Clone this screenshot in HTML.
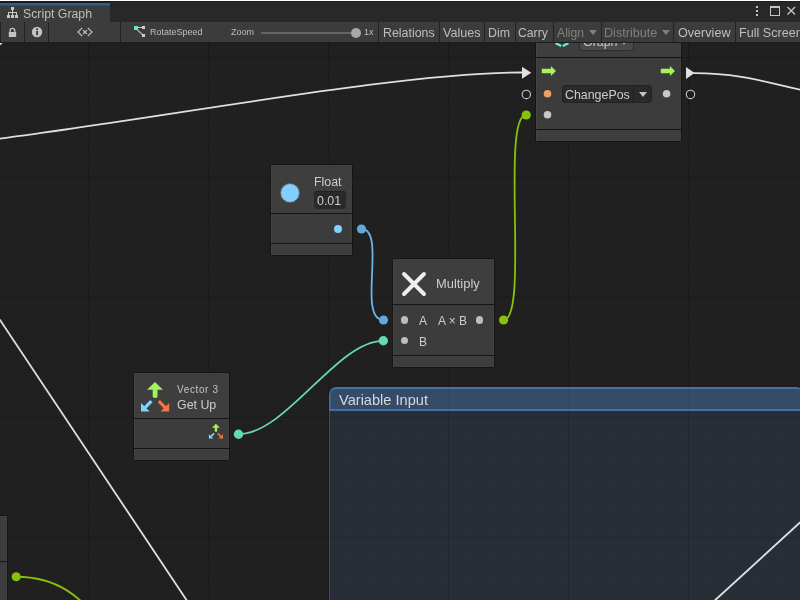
<!DOCTYPE html>
<html><head><meta charset="utf-8">
<style>
*{box-sizing:border-box;margin:0;padding:0}
html,body{width:800px;height:600px;overflow:hidden;background:#202020}
body{-webkit-font-smoothing:antialiased;position:relative;font-family:"Liberation Sans",sans-serif;color:#c4c4c4}
.abs{position:absolute}
#canvas{position:absolute;left:0;top:42px;width:800px;height:558px;background-color:#202020;
background-image:
linear-gradient(to right,#1a1a1a 1px,transparent 1px),
linear-gradient(to bottom,#1a1a1a 1px,transparent 1px),
linear-gradient(to right,#1f1f1f 1px,transparent 1px),
linear-gradient(to bottom,#1f1f1f 1px,transparent 1px);
background-size:120px 120px,120px 120px,12px 12px,12px 12px;
background-position:88px 15px,88px 15px,4px 3px,4px 3px}
#tabbar{position:absolute;left:0;top:0;width:800px;height:22px;background:#282828}
#tab{position:absolute;left:0;top:2px;width:110px;height:20px;background:linear-gradient(to bottom,#1c1c1c 0,#1c1c1c 1px,#2d5f8f 1px,#2d5f8f 3px,#34506c 3px,#34506c 3.6px,#3c3c3c 3.6px)}
#toolbar{position:absolute;left:0;top:22px;width:800px;height:20px;background:#3c3c3c;box-shadow:inset 1px 0 0 #232323,0 1px 0 #1c1c1c}
.sep{position:absolute;top:0;width:1px;height:20px;background:#232323}
.tt{will-change:transform;position:absolute;top:0;height:20px;line-height:20px;font-size:12.4px;color:#bebebe;white-space:nowrap}
.dis{color:#808080}
.node{position:absolute;background:#151515;border-radius:3px;overflow:hidden}
.sec{position:absolute;left:1px;right:1px;background:#3c3c3c;box-shadow:inset 1px 0 0 #444,inset -1px 0 0 #404040}
.hd{background:#3e3e3e}.ft{background:#3e3e3e}
.nt{will-change:transform;position:absolute;white-space:nowrap;color:#cccccc;font-size:12.4px;line-height:14px}
.dot{position:absolute;border-radius:50%}
</style></head><body>
<div id="canvas"></div>

<!-- group -->
<div class="abs" style="left:329px;top:387px;width:475px;height:230px;border-radius:7px;background-color:#282e38;overflow:hidden;
background-image:linear-gradient(to right,#21272f 1px,transparent 1px),linear-gradient(to bottom,#21272f 1px,transparent 1px),linear-gradient(to right,#272d37 1px,transparent 1px),linear-gradient(to bottom,#272d37 1px,transparent 1px);
background-size:120px 120px,120px 120px,12px 12px,12px 12px;background-position:119px 30px,119px 30px,11px 6px,11px 6px">
  <div class="abs" style="left:0;top:0;right:0;height:24px;border-radius:7px 7px 0 0;background-color:#354c68;
  background-image:linear-gradient(to right,#31465f 1px,transparent 1px),linear-gradient(to right,#344a66 1px,transparent 1px),linear-gradient(to bottom,#344a66 1px,transparent 1px);
  background-size:120px 120px,12px 12px,12px 12px;background-position:119px 0,11px 0,11px 6px;
  box-shadow:inset 0 2px 0 #4770a2,inset 0 -2px 0 #4770a2,inset 1.5px 0 0 #4770a2,inset -1.5px 0 0 #4770a2"></div>
  <div class="abs" style="left:0;top:24px;width:1px;bottom:0;background:#3a4e66"></div>
  <div class="abs" style="right:0;top:24px;width:1px;bottom:0;background:#3a4e66"></div>
  <div class="nt" style="left:10px;top:5px;font-size:14.6px;line-height:16px;color:#d4d8de">Variable Input</div>
</div>

<svg class="abs" style="left:0;top:0" width="800" height="600" viewBox="0 0 800 600">
  <g fill="none" stroke-linecap="round">
    <path d="M-162.4 152.2 C2.2 152.2 357.4 72.5 522 72.5" stroke="#e0e0e0" stroke-width="1.8"/>
    <path d="M694 73.1 C766.2 73.1 794.4 97.1 866.6 97.1" stroke="#e0e0e0" stroke-width="1.8"/>
    <path d="M0 320 L186.5 600" stroke="#e0e0e0" stroke-width="1.8"/>
    <path d="M715.3 600 L800 522.5" stroke="#e0e0e0" stroke-width="1.8"/>
    <path d="M503.5 320 C529.5 320 500.4 115 526.2 115" stroke="#86c20c" stroke-width="1.8"/>
    <path d="M361.5 229 C387.1 229 356.6 320 383.5 320" stroke="#6cb2e4" stroke-width="1.8"/>
    <path d="M238.5 434.2 C286 434.2 337 340.8 383 340.8" stroke="#64d8b2" stroke-width="1.8"/>
    <path d="M16.2 576.75 C94.7 576.75 100.2 650 150 650" stroke="#86c20c" stroke-width="1.8"/>
  </g>
  <!-- control ports -->
  <polygon points="522,66.8 531.3,72.8 522,78.8" fill="#e0e0e0"/>
  <polygon points="686,67 694.6,73 686,79" fill="#e0e0e0"/>
  <circle cx="526.3" cy="94.4" r="4.2" fill="none" stroke="#cccccc" stroke-width="1.1"/>
  <circle cx="690.5" cy="94.4" r="4.2" fill="none" stroke="#cccccc" stroke-width="1.1"/>
  <!-- outer data ports -->
  <circle cx="526.2" cy="115" r="4.6" fill="#86c20c"/>
  <circle cx="503.6" cy="320" r="4.6" fill="#86c20c"/>
  <circle cx="361.5" cy="229" r="4.6" fill="#63a8dc"/>
  <circle cx="383.5" cy="320" r="4.6" fill="#63a8dc"/>
  <circle cx="383.3" cy="340.8" r="4.7" fill="#64d8b2"/>
  <circle cx="238.5" cy="434.2" r="4.7" fill="#64d8b2"/>
  <circle cx="16.2" cy="576.75" r="4.6" fill="#86c20c"/>
</svg>

<!-- top node -->
<div class="node" style="left:535px;top:20px;width:147px;height:122px">
  <div class="sec hd" style="top:1px;height:36px"></div>
  <div class="sec" style="top:38px;height:71px"></div>
  <div class="sec ft" style="top:110px;height:11px"></div>
</div>
<div class="abs" style="left:580px;top:30px;width:53px;height:20px;background:#4a4a4a;border-radius:3px;box-shadow:0 0 0 1px #2e2e2e"></div>
<div class="nt" style="left:583px;top:35px">Graph</div>
<svg class="abs" style="left:621px;top:41px" width="6" height="4"><polygon points="0,0 6,0 3,3.5" fill="#d2d2d2"/></svg>
<svg class="abs" style="left:0;top:0" width="600" height="60"><path d="M556.3 43.4 L560.3 45.6 M567.7 43.4 L563.7 45.6" stroke="#5ef0d8" stroke-width="2.3" stroke-linecap="round"/></svg>
<svg class="abs" style="left:0;top:0" width="800" height="600">
  <!-- green arrows -->
  <path d="M541.8 68.8 H550.9 V65.9 L556 71 L550.9 76.1 V73.2 H541.8 Z" fill="#a8f25c"/>
  <path d="M660.8 68.8 H669.9 V65.9 L675 71 L669.9 76.1 V73.2 H660.8 Z" fill="#a8f25c"/>
  <circle cx="547.5" cy="93.8" r="3.8" fill="#f0a064"/>
  <circle cx="547.5" cy="114.8" r="3.8" fill="#c8c8c8"/>
  <circle cx="666.6" cy="93.8" r="3.8" fill="#c8c8c8"/>
</svg>
<div class="abs" style="left:562px;top:85px;width:90px;height:18px;background:#2a2a2a;border-radius:3px;border:1px solid #232323"></div>
<div class="abs" style="left:633px;top:85px;width:1px;height:18px;background:#1e1e1e"></div>
<div class="nt" style="left:565px;top:88px">ChangePos</div>
<svg class="abs" style="left:639px;top:91.5px" width="8" height="5"><polygon points="0,0 8,0 4,5" fill="#c4c4c4"/></svg>

<!-- Float node -->
<div class="node" style="left:270px;top:164px;width:83px;height:92px">
  <div class="sec hd" style="top:1px;height:48px"></div>
  <div class="sec" style="top:50px;height:29px"></div>
  <div class="sec ft" style="top:80px;height:11px"></div>
</div>
<div class="dot" style="left:279.9px;top:182.5px;width:20.2px;height:20.2px;background:#80cfff;border:1px solid #6a5a50"></div>
<div class="nt" style="left:314px;top:175px">Float</div>
<div class="abs" style="left:314px;top:191px;width:32px;height:18px;background:#2a2a2a;border-radius:3px;box-shadow:inset 0 1px 0 #202020"></div>
<div class="nt" style="left:317px;top:194px">0.01</div>
<div class="dot" style="left:334px;top:224.6px;width:8px;height:8px;background:#86cfff"></div>

<!-- Multiply node -->
<div class="node" style="left:392px;top:258px;width:103px;height:110px">
  <div class="sec hd" style="top:1px;height:45px"></div>
  <div class="sec" style="top:47px;height:50px"></div>
  <div class="sec ft" style="top:98px;height:11px"></div>
</div>
<svg class="abs" style="left:400px;top:270px" width="28" height="28"><path d="M4 4 L24 24 M24 4 L4 24" stroke="#eeeeee" stroke-width="3.9" stroke-linecap="round"/></svg>
<div class="nt" style="left:436px;top:277px;font-size:12.9px">Multiply</div>
<div class="dot" style="left:400.8px;top:316px;width:7.6px;height:7.6px;background:#bdbdbd"></div>
<div class="dot" style="left:400.8px;top:336.8px;width:7.6px;height:7.6px;background:#bdbdbd"></div>
<div class="dot" style="left:475.7px;top:316px;width:7.6px;height:7.6px;background:#bdbdbd"></div>
<div class="nt" style="left:419px;top:314px;font-size:12px">A</div>
<div class="nt" style="left:419px;top:335px;font-size:12px">B</div>
<div class="nt" style="left:438px;top:314px;font-size:12px">A × B</div>

<!-- Vector3 node -->
<div class="node" style="left:133px;top:372px;width:97px;height:89px">
  <div class="sec hd" style="top:1px;height:45px"></div>
  <div class="sec" style="top:47px;height:29px"></div>
  <div class="sec ft" style="top:77px;height:11px"></div>
</div>
<svg class="abs" style="left:0;top:0" width="800" height="600">
  <g>
    <path d="M155 381.9 L162.9 389.7 H157.5 V397 Q155.1 399.2 152.7 397 V389.7 H147.1 Z" fill="#a0f060"/>
    <path d="M141 402.9 V411.6 H149.7 Z" fill="#80d4ff"/><path d="M145 407.6 L151.4 401.2" stroke="#80d4ff" stroke-width="3.2"/>
    <path d="M169.2 402.9 V411.6 H160.5 Z" fill="#f57442"/><path d="M165.2 407.6 L158.8 401.2" stroke="#f57442" stroke-width="3.2"/>
  </g>
  <g transform="translate(215.95 423.75) scale(0.5) translate(-155.1 -381.9)">
    <path d="M155 381.9 L162.9 389.7 H157.5 V397 Q155.1 399.2 152.7 397 V389.7 H147.1 Z" fill="#a0f060"/>
    <path d="M141 402.9 V411.6 H149.7 Z" fill="#80d4ff"/><path d="M145 407.6 L151.4 401.2" stroke="#80d4ff" stroke-width="3.2"/>
    <path d="M169.2 402.9 V411.6 H160.5 Z" fill="#f57442"/><path d="M165.2 407.6 L158.8 401.2" stroke="#f57442" stroke-width="3.2"/>
  </g>
</svg>
<div class="nt" style="left:177px;top:383.8px;font-size:10px;line-height:12px;letter-spacing:0.62px;color:#c4c4c4">Vector 3</div>
<div class="nt" style="left:177px;top:398px">Get Up</div>


<!-- left edge node -->
<div class="node" style="left:-10px;top:515px;width:18px;height:100px">
  <div class="sec hd" style="top:1px;height:45px"></div>
  <div class="sec" style="top:47px;height:60px"></div>
</div>
<svg class="abs" style="left:0;top:42px" width="4" height="4"><polygon points="0,0.5 3.2,0.5 0,3.5" fill="#e0e0e0"/></svg>

<!-- tab bar -->
<div id="tabbar">
  <div class="abs" style="left:0;top:0;width:800px;height:1px;background:#ffffff"></div><div class="abs" style="left:0;top:1px;width:800px;height:1px;background:#1a1a1a"></div>
  <div id="tab"></div>
  <svg class="abs" style="left:0;top:0" width="22" height="22" fill="#c8c8c8">
    <rect x="11" y="7" width="3" height="3"/>
    <rect x="12" y="10" width="1" height="2"/>
    <rect x="8" y="12" width="9" height="1"/>
    <rect x="8" y="13" width="1" height="2"/><rect x="12" y="13" width="1" height="2"/><rect x="16" y="13" width="1" height="2"/>
    <rect x="7" y="15" width="3" height="3"/><rect x="11" y="15" width="3" height="3"/><rect x="15" y="15" width="3" height="3"/>
  </svg>
  <div class="tt" style="left:23px;top:5px;font-size:12.3px;height:19px;line-height:19px">Script Graph</div>
  <svg class="abs" style="left:750px;top:4px" width="50" height="16">
    <rect x="6" y="2" width="2" height="2" fill="#c4c4c4"/>
    <rect x="6" y="6" width="2" height="2" fill="#c4c4c4"/>
    <rect x="6" y="10" width="2" height="2" fill="#c4c4c4"/>
    <rect x="20.5" y="2.5" width="9" height="9" fill="none" stroke="#c4c4c4" stroke-width="1"/>
    <rect x="20" y="2" width="10" height="2" fill="#c4c4c4"/>
    <path d="M37.5 3 L45 10.5 M45 3 L37.5 10.5" stroke="#c4c4c4" stroke-width="1.4"/>
  </svg>
</div>

<!-- toolbar -->
<div id="toolbar"><div class="abs" style="left:1px;top:0;right:0;bottom:0">
  <div class="sep" style="left:23px"></div>
  <div class="sep" style="left:47px"></div>
  <div class="sep" style="left:119px"></div>
  <div class="sep" style="left:377px"></div>
  <div class="sep" style="left:438px"></div>
  <div class="sep" style="left:483px"></div>
  <div class="sep" style="left:514px"></div>
  <div class="sep" style="left:552px"></div>
  <div class="sep" style="left:600px"></div>
  <div class="sep" style="left:672px"></div>
  <div class="sep" style="left:734px"></div>
  <svg class="abs" style="left:-1px;top:0" width="20" height="20">
    <path d="M10.1 10.2 V8.7 A2.35 2.35 0 0 1 14.8 8.7 V10.2" fill="none" stroke="#c4c4c4" stroke-width="1.3"/>
    <rect x="8.8" y="10" width="7.4" height="5" fill="#c4c4c4"/>
  </svg>
  <svg class="abs" style="left:30px;top:4px" width="14" height="14">
    <circle cx="6" cy="6" r="5.2" fill="#c4c4c4"/>
    <rect x="5.3" y="2.3" width="1.6" height="1.6" fill="#262626"/>
    <rect x="5.3" y="4.8" width="1.6" height="4.4" fill="#262626"/>
  </svg>
  <svg class="abs" style="left:-1px;top:-22px" width="100" height="42"><path d="M82.2 27.8 L78 32 L82.2 36.2 M87.8 27.8 L92 32 L87.8 36.2 M83 30.2 L87 34 M87 30.2 L83 34" fill="none" stroke="#c4c4c4" stroke-width="1.1"/></svg>
  <svg class="abs" style="left:-1px;top:-22px" width="160" height="42">
    <line x1="137" y1="27.5" x2="143" y2="27.5" stroke="#c4c4c4" stroke-width="1"/>
    <line x1="136.5" y1="29" x2="143.5" y2="35.5" stroke="#b8b8b8" stroke-width="1.1"/>
    <rect x="134" y="26" width="4" height="4" fill="#5ee8cc"/>
    <rect x="142" y="26" width="3" height="3" fill="#d0d0d0"/>
    <rect x="142" y="34" width="3" height="3" fill="#d0d0d0"/>
  </svg>
  <div class="tt" style="left:149px;top:0px;font-size:9px">RotateSpeed</div>
  <div class="tt" style="left:230px;top:0px;font-size:9px">Zoom</div>
  <div class="abs" style="left:260px;top:10px;width:95px;height:2px;background:#656565"></div>
  <div class="dot" style="left:350px;top:6px;width:10px;height:10px;background:#a8a8a8"></div>
  <div class="tt" style="left:363px;top:0px;font-size:9px">1x</div>
  <div class="tt" style="left:382px;top:1px">Relations</div>
  <div class="tt" style="left:442px;top:1px;font-size:12.6px">Values</div>
  <div class="tt" style="left:487px;top:1px">Dim</div>
  <div class="tt" style="left:517px;top:1px;font-size:12.2px">Carry</div>
  <div class="tt dis" style="left:556px;top:1px;font-size:12.2px">Align</div>
  <svg class="abs" style="left:588px;top:8px" width="8" height="5"><polygon points="0,0 8,0 4,5" fill="#808080"/></svg>
  <div class="tt dis" style="left:603px;top:1px;font-size:12.6px">Distribute</div>
  <svg class="abs" style="left:661px;top:8px" width="8" height="5"><polygon points="0,0 8,0 4,5" fill="#808080"/></svg>
  <div class="tt" style="left:677px;top:1px;font-size:12.6px">Overview</div>
  <div class="tt" style="left:738px;top:1px;font-size:12.6px">Full Screen</div>
</div></div>

</body></html>
